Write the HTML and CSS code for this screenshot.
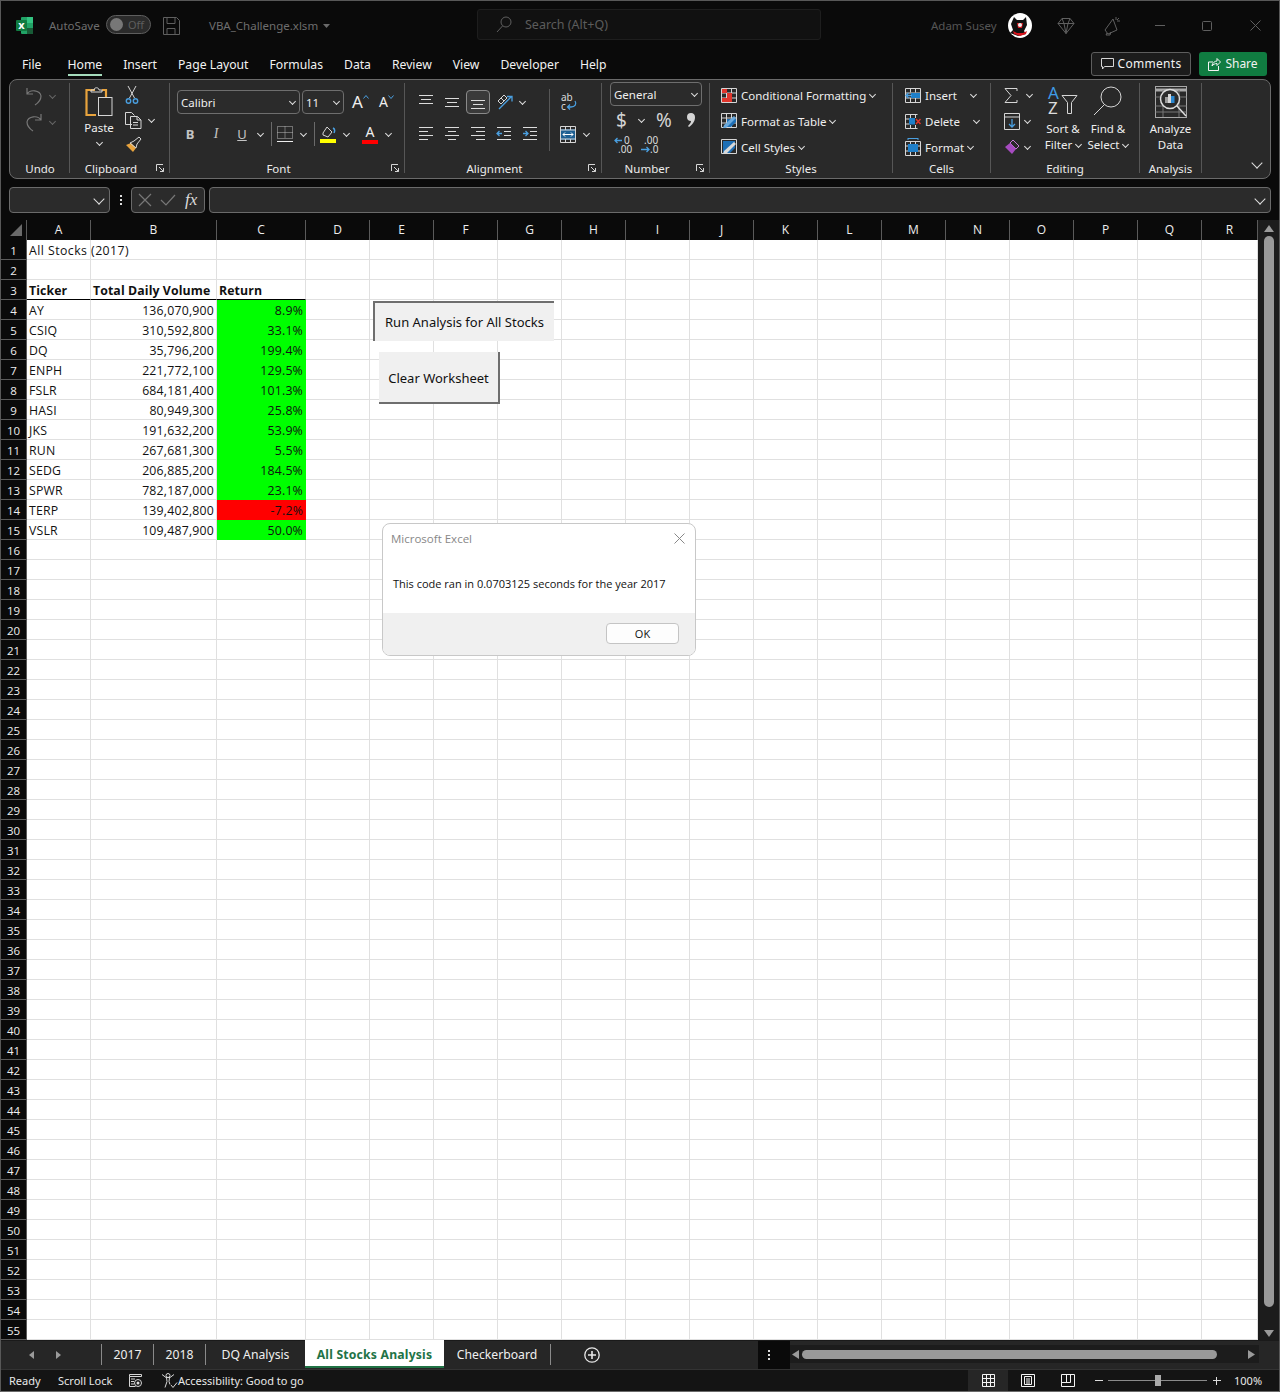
FILE: index.html
```html
<!DOCTYPE html>
<html lang="en">
<head>
    <meta charset="UTF-8">
    <title>VBA_Challenge.xlsm - Excel</title>
    <link rel="stylesheet" href="styles.css">
</head>
<body>
<div class="window">

    <!-- title bar -->
    <div class="titlebar">
        <svg class="logo" width="18" height="17" viewBox="0 0 18 17"><rect x="5" y="0" width="12" height="17" rx="1" fill="#21a366"/><rect x="11" y="0" width="6" height="6" fill="#33c481"/><rect x="11" y="11" width="6" height="6" fill="#185c37"/><rect x="0" y="3" width="11" height="11" rx="1" fill="#107c41"/><text x="5.5" y="12" class="logo-x">x</text></svg>
        <span class="autosave">AutoSave</span>
        <span class="toggle"><span class="knob"></span>Off</span>
        <svg class="save" width="17" height="18" viewBox="0 0 17 18"><path class="dim" d="M.5.5h13l3 3v14H.5zM4 .5v6h8v-6M4 17.5v-6h8v6"/></svg>
        <span class="filename">VBA_Challenge.xlsm</span>
        <svg class="file-caret" width="7" height="4" viewBox="0 0 7 4"><path d="M0 0h7L3.5 4z" fill="#6a6a6a"/></svg>
        <div class="search">
            <svg width="16" height="17" viewBox="0 0 16 17"><circle cx="10" cy="6" r="5" class="dim"/><path class="dim" d="M6.5 10 1 16"/></svg>
            <span>Search (Alt+Q)</span>
        </div>
        <span class="username">Adam Susey</span>
        <svg class="avatar" width="24" height="25" viewBox="0 0 24 25"><ellipse cx="12" cy="12.5" rx="12" ry="12.5" fill="#fff"/><path d="M6 4l3 3h6l3-3 1 8-3 6 2 3-8 2-8-3 3-3-2-6z" fill="#111"/><path d="M9 10h6l-1 5h-4zM5 18l4 2 6 0 4-2-1 3-6 2-6-2z" fill="#d8141c"/><circle cx="12" cy="12" r="2" fill="#eee"/></svg>
        <svg class="premium" width="18" height="16" viewBox="0 0 18 16"><path class="dim" d="M5 .5h8l4 5-8 10-8-10zM1 5.500h16M5 .5l2 5 2 10 2-10 2-5"/></svg>
        <svg class="idea" width="18" height="20" viewBox="0 0 18 20"><path class="dim" d="M10 3 2 14l3 4 9-4zM4 17l-1 2 4 0 1-3M13 1v3M17 5h-3M16 2l-2 2"/></svg>
        <svg class="win-min" width="10" height="1" viewBox="0 0 10 1"><path class="dim" d="M0 .5h10"/></svg>
        <svg class="win-max" width="10" height="10" viewBox="0 0 10 10"><rect class="dim" x=".5" y=".5" width="9" height="9" rx="1"/></svg>
        <svg class="win-close" width="11" height="11" viewBox="0 0 11 11"><path class="dim" d="M.5.500l10 10M10.500.500l-10 10"/></svg>
    </div>

    <!-- ribbon tabs -->
    <div class="tabbar">
        <span class="rtab file-tab">File</span>
        <span class="rtab active">Home</span>
        <span class="rtab">Insert</span>
        <span class="rtab">Page Layout</span>
        <span class="rtab">Formulas</span>
        <span class="rtab">Data</span>
        <span class="rtab">Review</span>
        <span class="rtab">View</span>
        <span class="rtab">Developer</span>
        <span class="rtab">Help</span>
        <button class="comments">
            <svg width="13" height="13" viewBox="0 0 13 13"><path class="ic" d="M.5 1.500h12v8h-9l-2 2.500v-2.500h-1z"/></svg>
            Comments
        </button>
        <button class="share">
            <svg width="13" height="14" viewBox="0 0 13 14"><path class="ic-w" d="M5 5H.5v8.500h10V9M4 9c0-3 3-5 5-5V1.500L12.500 5 9 8.500V6.500C7 6.500 5 7.500 4 9z"/></svg>
            Share
        </button>
    </div>

    <!-- ribbon -->
    <div class="ribbon">

        <div class="group undo">
            <div class="body stack">
                <div class="line">
                    <svg width="16" height="19" viewBox="0 0 16 19"><path class="ic-dim" d="M1 1v6h6M1 7c3-5 13-4 14 2 0 4-3 7-6 9"/></svg>
                    <i class="caret off"></i>
                </div>
                <div class="line">
                    <svg width="16" height="19" viewBox="0 0 16 19"><path class="ic-dim" d="M15 1v6H9M15 7C12 2 2 3 1 9c0 4 3 7 6 9"/></svg>
                    <i class="caret off"></i>
                </div>
            </div>
            <div class="label">Undo</div>
        </div>

        <div class="group clipboard launch">
            <div class="body">
                <div class="paste">
                    <svg width="28" height="30" viewBox="0 0 28 30"><path d="M10 3H1.500v25H11" fill="none" stroke="#e8a33d" stroke-width="2.200"/><path d="M17 3h4v8" fill="none" stroke="#e8a33d" stroke-width="2.200"/><path class="ic" d="M6 5V3h3c0-3 5-3 5 0h3v2z"/><rect class="ic" x="13.500" y="10.500" width="13.500" height="18"/></svg>
                    <span class="paste-text">Paste</span>
                    <i class="caret"></i>
                </div>
                <div class="clip-tools">
                    <svg width="12" height="18" viewBox="0 0 12 18"><path class="ic" d="M2 0l6.500 12M10 0L3.500 12"/><circle cx="2.500" cy="15" r="2.200" fill="none" stroke="#4a9fe0" stroke-width="1.400"/><circle cx="9.500" cy="15" r="2.200" fill="none" stroke="#4a9fe0" stroke-width="1.400"/></svg>
                    <div class="line">
                        <svg width="17" height="17" viewBox="0 0 17 17"><path class="ic" d="M7 12.500H.5V.5h6l3 3M5.500 4.500h7l3.500 3.500v8.500H5.500zM12 4.500V8h4M8 10.500h5M8 13h5"/></svg>
                        <i class="caret"></i>
                    </div>
                    <svg width="17" height="16" viewBox="0 0 17 16"><path d="M1 8l7 7 3-4-5-5z" fill="#e8a33d"/><path class="ic" d="M5 6l6 5 1-4 4-5-2-2-5 4z"/></svg>
                </div>
            </div>
            <div class="label">Clipboard</div>
            <svg class="launcher" width="8" height="8" viewBox="0 0 8 8"><path class="ic" d="M.5 7V.5H7M3 3l4.500 4.500M7.500 4v3.500H4"/></svg>
        </div>

        <div class="group font launch">
            <div class="body stack2">
                <div class="row">
                    <div class="combo font-name">Calibri<i class="caret"></i></div>
                    <div class="combo font-size">11<i class="caret"></i></div>
                    <span class="grow-a">A<svg width="6" height="4" viewBox="0 0 6 4"><path d="M.5 3.500l2.500-3 2.500 3" fill="none" stroke="#4a9fe0"/></svg></span>
                    <span class="shrink-a">A<svg width="6" height="4" viewBox="0 0 6 4"><path d="M.5.500l2.500 3 2.500-3" fill="none" stroke="#4a9fe0"/></svg></span>
                </div>
                <div class="row">
                    <span class="btn strong">B</span>
                    <span class="btn slant">I</span>
                    <span class="btn under">U</span>
                    <span class="drop"><i class="caret"></i></span>
                    <span class="vsep"></span>
                    <span class="btn"><svg width="16" height="17" viewBox="0 0 16 17"><path d="M.5.500h15v12H.5zM8 .5v12M.5 6.500h15" fill="none" stroke="#bbb" stroke-dasharray="1 1"/><path d="M0 15.500h16" stroke="#eee"/></svg></span>
                    <span class="drop"><i class="caret"></i></span>
                    <span class="vsep"></span>
                    <span class="btn"><svg width="16" height="19" viewBox="0 0 16 19"><path class="ic" d="M3 8l4-6 5 5-4 5-5-2z"/><path d="M13 3c2 1 2 3 1 5" fill="none" stroke="#4a9fe0" stroke-width="1.500"/><rect y="14" width="16" height="4" fill="#ffff00"/></svg></span>
                    <span class="drop"><i class="caret"></i></span>
                    <span class="btn color-a">A</span>
                    <span class="drop"><i class="caret"></i></span>
                </div>
            </div>
            <div class="label">Font</div>
            <svg class="launcher" width="8" height="8" viewBox="0 0 8 8"><path class="ic" d="M.5 7V.5H7M3 3l4.500 4.500M7.500 4v3.500H4"/></svg>
        </div>

        <div class="group alignment launch">
            <div class="body">
                <div class="stack2">
                    <div class="row">
                        <span class="btn"><svg width="14" height="14" viewBox="0 0 14 14"><path class="lines" d="M0 .5h14M2 4.500h10M0 8.500h14"/></svg></span>
                        <span class="btn"><svg width="14" height="14" viewBox="0 0 14 14"><path class="lines" d="M0 3.500h14M2 7.500h10M0 11.500h14"/></svg></span>
                        <span class="btn pressed"><svg width="14" height="14" viewBox="0 0 14 14"><path class="lines" d="M0 5.500h14M2 9.500h10M0 13.500h14"/></svg></span>
                        <span class="btn"><svg width="17" height="16" viewBox="0 0 17 16"><path class="ic" d="M2 7l6-6 3 3-6 6zM5 4l3 3"/><path d="M3 15 15 3M11 2.500h5v5" fill="none" stroke="#4a9fe0" stroke-width="1.300"/></svg></span>
                        <span class="drop"><i class="caret"></i></span>
                    </div>
                    <div class="row">
                        <span class="btn"><svg width="14" height="14" viewBox="0 0 14 14"><path class="lines" d="M0 .5h14M0 4.500h9M0 8.500h14M0 12.500h9"/></svg></span>
                        <span class="btn"><svg width="14" height="14" viewBox="0 0 14 14"><path class="lines" d="M0 .5h14M3 4.500h8M0 8.500h14M3 12.500h8"/></svg></span>
                        <span class="btn"><svg width="14" height="14" viewBox="0 0 14 14"><path class="lines" d="M0 .5h14M5 4.500h9M0 8.500h14M5 12.500h9"/></svg></span>
                        <span class="btn"><svg width="14" height="14" viewBox="0 0 14 14"><path class="lines" d="M0 .5h14M7 4.500h7M7 8.500h7M0 12.500h14"/><path d="M5 6.500H0M2.500 4 0 6.500 2.500 9" fill="none" stroke="#4a9fe0" stroke-width="1.300"/></svg></span>
                        <span class="btn"><svg width="14" height="14" viewBox="0 0 14 14"><path class="lines" d="M0 .5h14M7 4.500h7M7 8.500h7M0 12.500h14"/><path d="M0 6.500h5M2.500 4 5 6.500 2.500 9" fill="none" stroke="#4a9fe0" stroke-width="1.300"/></svg></span>
                    </div>
                </div>
                <span class="inner-sep"></span>
                <div class="stack2 merge-col">
                    <div class="row">
                        <svg class="wrap-ic" width="18" height="20" viewBox="0 0 18 20"><text x="1" y="9" class="tiny">ab</text><text x="1" y="18" class="tiny">c</text><path d="M15 9c2 3 0 6-4 6H8M10 12.500 7.500 15 10 17.500" fill="none" stroke="#4a9fe0" stroke-width="1.300"/></svg>
                    </div>
                    <div class="row">
                        <svg width="16" height="17" viewBox="0 0 16 17"><rect x="0" y="3" width="16" height="11" fill="#1e5f92"/><path class="ic" d="M.5.500h15v16H.5zM.5 4h15M.5 13h15M5.500.5V4M10.500.5V4M5.500 13v3.500M10.500 13v3.500"/><path d="M3 8.500h10M5 6.500l-2 2 2 2M11 6.500l2 2-2 2" fill="none" stroke="#fff"/></svg>
                        <span class="drop merge-drop"><i class="caret"></i></span>
                    </div>
                </div>
            </div>
            <div class="label">Alignment</div>
            <svg class="launcher" width="8" height="8" viewBox="0 0 8 8"><path class="ic" d="M.5 7V.5H7M3 3l4.500 4.500M7.500 4v3.500H4"/></svg>
        </div>

        <div class="group number launch">
            <div class="body num-stack">
                <div class="combo num-format">General<i class="caret"></i></div>
                <div class="row num-symbols">
                    <span class="sym dollar">$</span>
                    <span class="drop"><i class="caret"></i></span>
                    <span class="sym percent">%</span>
                    <svg class="comma" width="8" height="14" viewBox="0 0 8 14"><path d="M4 0a4 4 0 0 1 4 4.500c0 4-3 7.500-6 9.500l-1-1c2-2 3-3.500 3-5a4 4 0 0 1 0-8z" fill="#d4d4d4"/></svg>
                </div>
                <div class="row num-decimals">
                    <svg width="21" height="20" viewBox="0 0 21 20"><path d="M8 5.500H1M3.500 3 1 5.500 3.500 8" fill="none" stroke="#4a9fe0" stroke-width="1.300"/><text x="10" y="9" class="tiny">0</text><text x="4" y="18" class="tiny">.00</text></svg>
                    <svg width="21" height="20" viewBox="0 0 21 20"><text x="4" y="9" class="tiny">.00</text><path d="M1 14.500h8M6.500 12 9 14.500 6.500 17" fill="none" stroke="#4a9fe0" stroke-width="1.300"/><text x="10" y="18" class="tiny">.0</text></svg>
                </div>
            </div>
            <div class="label">Number</div>
            <svg class="launcher" width="8" height="8" viewBox="0 0 8 8"><path class="ic" d="M.5 7V.5H7M3 3l4.500 4.500M7.500 4v3.500H4"/></svg>
        </div>

        <div class="group styles">
            <div class="body list">
                <div class="item">
                    <svg width="16" height="15" viewBox="0 0 16 15"><path class="ic" d="M.5.500h15v14H.5zM5.500.5v14M10.500.5v14M.5 5h15M.5 10h15"/><path d="M1 1h5v4H1zM6 5h5v5H6zM1 10h10v4H1z" fill="#e0352b"/></svg>
                    Conditional Formatting<i class="caret"></i>
                </div>
                <div class="item">
                    <svg width="16" height="16" viewBox="0 0 16 16"><path class="ic" d="M.5.500h15v14H.5zM5.500.5v14M10.500.5v14M.5 5h15M.5 10h15"/><path d="M6 6h9v3l-5 5H6z" fill="#1e6fb5"/><path d="M15 5 5 15H2l1-3L13 3z" fill="#6aa9dc"/></svg>
                    Format as Table<i class="caret"></i>
                </div>
                <div class="item">
                    <svg width="16" height="16" viewBox="0 0 16 16"><path class="ic" d="M.5.500h15v14H.5z"/><path d="M2 2h12v7l-5 5H2z" fill="#1e6fb5"/><path d="M15 5 5 15H2l1-3L13 3z" fill="#d8d8d8"/></svg>
                    Cell Styles<i class="caret"></i>
                </div>
            </div>
            <div class="label">Styles</div>
        </div>

        <div class="group cells">
            <div class="body list">
                <div class="item">
                    <svg width="16" height="15" viewBox="0 0 16 15"><path class="ic" d="M.5.500h15v14H.5zM.5 5h15M.5 10h15M5.500.5v4M5.500 10v4M10.500.5v4M10.500 10v4"/><rect x="6" y="5" width="9" height="5" fill="#1e7fc9"/><path d="M7 7.500H1M3.500 5 1 7.500 3.500 10" fill="none" stroke="#4a9fe0" stroke-width="1.300"/></svg>
                    Insert<i class="caret far"></i>
                </div>
                <div class="item">
                    <svg width="16" height="15" viewBox="0 0 16 15"><path class="ic" d="M.5.500h12M.5 14.500h12M.5.5v14M.5 5h4M.5 10h4M5.500.5V4M5.500 11v3.500M10.500.5V4M10.500 11v3.500"/><rect x="4" y="4" width="6" height="6.500" fill="#1e7fc9"/><path d="M11 5l4.500 5M15.500 5 11 10" stroke="#e0352b" stroke-width="1.500"/></svg>
                    Delete<i class="caret far"></i>
                </div>
                <div class="item">
                    <svg width="16" height="18" viewBox="0 0 16 18"><path d="M3 .5h10M3 0v2M13 0v2" stroke="#4a9fe0"/><path class="ic" d="M.5 3.500h15v14H.5zM.5 8h15M.5 13h15M5.500 3.500v14M10.500 3.500v14"/><rect x="3" y="6" width="10" height="8" fill="#1e7fc9"/></svg>
                    Format<i class="caret"></i>
                </div>
            </div>
            <div class="label">Cells</div>
        </div>

        <div class="group editing">
            <div class="body">
                <div class="stack edit-left">
                    <div class="line">
                        <svg width="14" height="15" viewBox="0 0 14 15"><path class="ic" d="M13 3V.5H1L7 7.500 1 14.500h12V12"/></svg>
                        <i class="caret sum-caret"></i>
                    </div>
                    <div class="line">
                        <svg width="16" height="17" viewBox="0 0 16 17"><path class="ic" d="M.5.500h15v16H.5zM.5 4h15"/><path d="M8 6v8M5 11l3 3 3-3" fill="none" stroke="#4a9fe0" stroke-width="1.300"/></svg>
                        <i class="caret"></i>
                    </div>
                    <div class="line">
                        <svg width="16" height="16" viewBox="0 0 16 16"><path d="M9 1l6 6-3 3-6-6z" fill="none" stroke="#c87ad8"/><path d="M6 4l6 6-4 5-7-7z" fill="#a64bc0"/></svg>
                        <i class="caret"></i>
                    </div>
                </div>
                <div class="tall sort">
                    <svg width="30" height="30" viewBox="0 0 30 30"><text x="0" y="13" class="az blue">A</text><text x="0" y="28" class="az">Z</text><path class="ic" d="M14 9.500h15l-5.500 7v11h-4v-11z"/></svg>
                    <span>Sort &amp;</span>
                    <span>Filter<i class="caret"></i></span>
                </div>
                <div class="tall find">
                    <svg width="30" height="30" viewBox="0 0 30 30"><circle class="ic" cx="18" cy="11" r="10"/><path class="ic" d="M11 19 1 29"/></svg>
                    <span>Find &amp;</span>
                    <span>Select<i class="caret"></i></span>
                </div>
            </div>
            <div class="label">Editing</div>
        </div>

        <div class="group analysis">
            <div class="body">
                <div class="tall analyze">
                    <svg width="32" height="32" viewBox="0 0 32 32"><rect x=".5" y=".5" width="31" height="31" fill="none" stroke="#a8a8a8"/><path d="M0 4h32" stroke="#a8a8a8" stroke-width="3"/><path d="M.5 11h31M.5 20h31M.5 26h31M8 4v27M24 4v27" stroke="#777"/><circle cx="15" cy="13" r="9.500" fill="#2b2b2b" stroke="#ddd" stroke-width="1.500"/><rect x="10" y="11" width="3" height="6" fill="#9a9a9a"/><rect x="13" y="8" width="3" height="9" fill="#d8d8d8"/><rect x="16" y="10" width="3.500" height="7" fill="#2a87d0"/><path d="M22 20l9 10" stroke="#ddd" stroke-width="1.500"/></svg>
                    <span>Analyze</span>
                    <span>Data</span>
                </div>
            </div>
            <div class="label">Analysis</div>
        </div>

        <div class="collapse"><i class="caret big"></i></div>
    </div>

    <!-- formula bar -->
    <div class="formulabar">
        <div class="namebox"><i class="caret big"></i></div>
        <div class="grip"><i></i><i></i><i></i></div>
        <div class="fxbox">
            <svg width="14" height="14" viewBox="0 0 14 14"><path class="ic-dim" d="M1 1l12 12M13 1 1 13"/></svg>
            <svg width="16" height="12" viewBox="0 0 16 12"><path class="ic-dim" d="M1 6l5 5L15 1"/></svg>
            <span class="fx">fx</span>
        </div>
        <div class="formula"><i class="caret big"></i></div>
    </div>

    <!-- sheet -->
    <div class="sheet">
        <div class="grid-wrap">
            <table class="grid" id="grid"></table>

            <button class="macro run-macro">Run Analysis for All Stocks</button>
            <button class="macro clear-macro">Clear Worksheet</button>

            <div class="msgbox">
                <div class="msg-title">
                    Microsoft Excel
                    <svg width="11" height="11" viewBox="0 0 11 11"><path d="M.5.500l10 10M10.500.500l-10 10" stroke="#888" fill="none"/></svg>
                </div>
                <div class="msg-text">This code ran in 0.0703125 seconds for the year 2017</div>
                <div class="msg-foot"><button class="msg-ok">OK</button></div>
            </div>
        </div>
        <div class="vscroll">
            <svg width="10" height="7" viewBox="0 0 10 7"><path d="M5 0l5 7H0z" fill="#9a9a9a"/></svg>
            <div class="vthumb"></div>
            <svg width="10" height="7" viewBox="0 0 10 7"><path d="M5 7 0 0h10z" fill="#9a9a9a"/></svg>
        </div>
    </div>

    <!-- sheet tabs -->
    <div class="sheetbar">
        <div class="nav">
            <svg width="5" height="8" viewBox="0 0 5 8"><path d="M5 0v8L0 4z" fill="#9a9a9a"/></svg>
            <svg width="5" height="8" viewBox="0 0 5 8"><path d="M0 0v8l5-4z" fill="#9a9a9a"/></svg>
        </div>
        <span class="stab first">2017</span>
        <span class="stab">2018</span>
        <span class="stab dq">DQ Analysis</span>
        <span class="stab current">All Stocks Analysis</span>
        <span class="stab check">Checkerboard</span>
        <svg class="add-sheet" width="16" height="16" viewBox="0 0 16 16"><circle cx="8" cy="8" r="7.200" fill="none" stroke="#e8e8e8" stroke-width="1.300"/><path d="M8 4v8M4 8h8" stroke="#e8e8e8" stroke-width="1.600"/></svg>
        <div class="more"><i></i><i></i><i></i></div>
        <div class="hscroll">
            <svg width="7" height="9" viewBox="0 0 7 9"><path d="M7 0v9L0 4.500z" fill="#9a9a9a"/></svg>
            <div class="hthumb"></div>
            <svg width="7" height="9" viewBox="0 0 7 9"><path d="M0 0v9l7-4.500z" fill="#9a9a9a"/></svg>
        </div>
    </div>

    <!-- status bar -->
    <div class="statusbar">
        <span class="ready">Ready</span>
        <span class="lock">Scroll Lock</span>
        <svg class="macro-ic" width="13" height="13" viewBox="0 0 13 13"><path class="ic" d="M.5.500h12v2H.5zM.5 2.500v10h6M2 5h4M2 7.500h3M2 10h3"/><circle class="ic" cx="9" cy="9" r="3.500"/><circle cx="9" cy="9" r="1.500" fill="#ddd"/></svg>
        <svg class="access-ic" width="17" height="16" viewBox="0 0 17 16"><circle class="ic" cx="7" cy="2.500" r="2"/><path class="ic" d="M1 1.500l4 3h4l4-3M5.500 4.500l.5 4-2 6M8.500 4.500l-.5 4 1 3M10 12l2 2.500 4-5"/></svg>
        <span class="access">Accessibility: Good to go</span>
        <div class="views">
            <span class="view on"><svg width="13" height="13" viewBox="0 0 13 13"><path class="ic-w" d="M.5.500h12v12H.5zM4.500.5v12M8.500.5v12M.5 4.500h12M.5 8.500h12"/></svg></span>
            <span class="view"><svg width="14" height="13" viewBox="0 0 14 13"><path class="ic-w" d="M.5.500h13v12H.5zM3.500 2.500h7v8h-7zM5 5h4M5 7h4M5 9h4"/></svg></span>
            <span class="view"><svg width="14" height="13" viewBox="0 0 14 13"><path class="ic-w" d="M.5.500h13v12H.5zM.5 8.500h9V.5M5.500.5v8"/></svg></span>
        </div>
        <span class="zoom-sign minus"></span>
        <div class="slider"><span class="slider-thumb"></span></div>
        <span class="zoom-sign plus"></span>
        <span class="zoom-value">100%</span>
    </div>
</div>

<script src="grid.js"></script>
</body>
</html>
```

FILE: styles.css
```css
* {
    box-sizing: border-box;
}
body {
    margin: 0;
    background: #0a0a0a;
    font-family: "Noto Sans", "Open Sans", sans-serif;
    font-size: 12px;
    color: #efefef;
}
button {
    font-family: inherit;
    cursor: pointer;
}
i {
    font-style: normal;
}
svg {
    display: block;
    flex: none;
    overflow: visible;
}
.window {
    height: 1392px;
    border: 1px solid #585858;
    border-bottom-color: #6a6a6a;
    background: #0a0a0a;
    overflow: hidden;
}

/* svg strokes */
.dim {
    fill: none;
    stroke: #5f5f5f;
}
.ic {
    fill: none;
    stroke: #d6d6d6;
}
.ic-w {
    fill: none;
    stroke: #f4f4f4;
}
.ic-dim {
    fill: none;
    stroke: #777;
    stroke-width: 1.2;
}
.lines {
    fill: none;
    stroke: #dcdcdc;
}
.tiny {
    font-size: 10px;
    fill: #dcdcdc;
}
.az {
    font-size: 17px;
    fill: #dcdcdc;
}
.az.blue {
    fill: #3f9be6;
}

/* caret used everywhere */
.caret {
    display: inline-block;
    width: 5px;
    height: 5px;
    margin: 0 0 2px 5px;
    border-right: 1.4px solid #dedede;
    border-bottom: 1.4px solid #dedede;
    transform: rotate(45deg);
    flex: none;
}
.caret.off {
    border-color: #666;
    margin-left: 8px;
}
.caret.big {
    width: 8px;
    height: 8px;
    margin: 0;
}

/* title bar */
.titlebar {
    display: flex;
    align-items: center;
    height: 47px;
    padding-top: 2px;
    color: #6e6e6e;
    font-size: 11.500px;
}
.logo {
    margin-left: 15px;
}
.logo-x {
    font-size: 11px;
    font-weight: 700;
    fill: #fff;
    text-anchor: middle;
}
.autosave {
    margin-left: 15px;
    width: 57px;
}
.toggle {
    display: flex;
    align-items: center;
    width: 45px;
    height: 19px;
    margin-top: -2px;
    border: 1px solid #5e5e5e;
    border-radius: 10px;
    background: #2b2b2b;
    padding-left: 3px;
    font-size: 11px;
    color: #5e5e5e;
}
.knob {
    width: 13px;
    height: 13px;
    border-radius: 50%;
    background: #777;
    margin-right: 5px;
}
.save {
    margin-left: 12px;
}
.filename {
    margin-left: 29px;
    width: 113px;
}
.file-caret {
    margin-left: 1px;
}
.search {
    display: flex;
    align-items: center;
    gap: 13px;
    width: 344px;
    height: 31px;
    margin: -2px 0 0 147px;
    padding-left: 18px;
    background: #111;
    border: 1px solid #1e1e1e;
    border-radius: 3px;
    color: #5c5c5c;
    font-size: 12.500px;
}
.username {
    margin-left: 110px;
    width: 70px;
    color: #555;
}
.avatar {
    margin-left: 7px;
}
.premium {
    margin-left: 25px;
}
.idea {
    margin-left: 28px;
}
.win-min {
    margin-left: 34px;
}
.win-max {
    margin-left: 37px;
}
.win-close {
    margin-left: 38px;
}

/* ribbon tabs */
.tabbar {
    display: flex;
    align-items: center;
    gap: 21px;
    height: 31px;
    padding-left: 21px;
}
.rtab {
    position: relative;
    top: 1px;
    font-size: 12.200px;
    color: #f2f2f2;
    line-height: 30px;
}
.file-tab {
    margin-right: 5px;
}
.rtab.active::after {
    content: "";
    position: absolute;
    left: 0;
    right: 0;
    bottom: 4px;
    height: 2px;
    background: #a5dcbc;
}
.comments,
.share {
    display: flex;
    align-items: center;
    justify-content: center;
    gap: 4px;
    height: 24px;
    padding-top: 1px;
    border-radius: 3px;
    color: #f2f2f2;
    font-size: 12px;
}
.comments {
    width: 100px;
    margin-left: auto;
    margin-right: -13px;
    background: #1c1c1c;
    border: 1px solid #5e5e5e;
    letter-spacing: .3px;
}
.share {
    width: 68px;
    margin-right: 12px;
    background: #107c41;
    border: none;
}

/* ribbon */
.ribbon {
    display: flex;
    height: 100px;
    margin: 0 8px;
    padding-left: 1px;
    background: #292929;
    border: 1px solid #6a6a6a;
    border-radius: 8px;
    font-size: 11.500px;
}
.group {
    position: relative;
    display: flex;
    flex-direction: column;
    flex: none;
    height: 90px;
    margin-top: 3px;
    border-right: 1px solid #565656;
}
.body {
    display: flex;
    flex: 1;
    min-height: 0;
}
.label {
    height: 16px;
    line-height: 16px;
    margin-bottom: -4px;
    text-align: center;
    font-size: 11.500px;
    color: #ececec;
}
.launch .label {
    padding-right: 17px;
}
.launcher {
    position: absolute;
    right: 5px;
    bottom: 1px;
}
.undo { width: 59px; }
.clipboard { width: 100px; }
.font { width: 235px; }
.alignment { width: 197px; }
.number { width: 108px; }
.styles { width: 183px; }
.cells { width: 98px; }
.editing { width: 149px; }
.analysis { width: 62px; }

.line {
    display: flex;
    align-items: center;
    height: 26px;
}
.stack {
    flex-direction: column;
}
.undo .stack {
    padding: 0 0 0 15px;
}

/* clipboard */
.paste {
    display: flex;
    flex-direction: column;
    align-items: center;
    width: 40px;
    margin-left: 9px;
    padding-top: 4px;
}
.paste-text {
    margin-top: 3px;
}
.paste .caret {
    margin: 5px 0 0;
}
.clip-tools {
    display: flex;
    flex-direction: column;
    align-items: flex-start;
    justify-content: space-between;
    height: 70px;
    margin-left: 6px;
    padding-top: 3px;
}
.clip-tools > svg:first-child {
    margin-left: 1px;
}
.clip-tools .caret {
    margin-left: 7px;
}

/* font group */
.stack2 {
    display: flex;
    flex-direction: column;
    gap: 8px;
    padding-top: 7px;
}
.row {
    display: flex;
    align-items: center;
    height: 24px;
}
.font .stack2 {
    padding-left: 7px;
}
.combo {
    display: flex;
    align-items: center;
    justify-content: space-between;
    height: 24px;
    padding: 1px 4px 0 3px;
    background: #2b2b2b;
    border: 1px solid #6e6e6e;
    border-radius: 4px;
}
.font-name {
    width: 123px;
}
.font-size {
    width: 42px;
    margin-left: 2px;
}
.grow-a,
.shrink-a {
    display: flex;
    align-items: flex-start;
    font-size: 17px;
    line-height: 20px;
}
.grow-a svg,
.shrink-a svg {
    margin-top: 3px;
}
.grow-a {
    margin-left: 8px;
}
.shrink-a {
    margin-left: 10px;
    font-size: 14px;
}
.btn {
    display: flex;
    align-items: center;
    justify-content: center;
    width: 26px;
    height: 24px;
}
.drop {
    display: flex;
    justify-content: center;
    width: 11px;
}
.drop .caret {
    margin: 0 0 2px;
}
.vsep {
    width: 1px;
    height: 24px;
    margin-left: 5px;
    background: #6a6a6a;
}
.strong {
    font-weight: 700;
    color: #c4c4c4;
    font-size: 13px;
}
.slant {
    font-style: italic;
    font-family: "Liberation Serif", serif;
    font-size: 14px;
    color: #c4c4c4;
}
.under {
    text-decoration: underline;
    font-size: 13px;
    color: #c4c4c4;
}
.color-a {
    margin-left: 5px;
    position: relative;
    font-size: 14px;
    padding-bottom: 5px;
}
.color-a::after {
    content: "";
    position: absolute;
    left: 5px;
    bottom: 2px;
    width: 16px;
    height: 4px;
    background: #ff0000;
}

/* alignment */
.alignment .body {
    padding-left: 8px;
}
.pressed {
    width: 24px;
    margin: 0 1px;
    background: #3a3a3a;
    border: 1px solid #8a8a8a;
    border-radius: 4px;
}
.inner-sep {
    width: 1px;
    height: 62px;
    margin: 6px 0 0 6px;
    background: #565656;
}
.merge-col {
    margin-left: 10px;
}
.merge-drop {
    margin-left: 5px;
}

/* number */
.num-stack {
    flex-direction: column;
    padding-left: 8px;
}
.num-format {
    width: 92px;
    margin-top: -1px;
}
.num-symbols {
    margin-top: 2px;
}
.num-decimals {
    gap: 5px;
    margin-left: 4px;
    margin-top: 1px;
}
.sym {
    display: block;
    font-size: 19px;
    color: #d4d4d4;
    line-height: 24px;
}
.dollar {
    margin-left: 6px;
    width: 16px;
}
.num-symbols .drop {
    width: 18px;
}
.percent {
    width: 28px;
    text-align: center;
}
.comma {
    margin-left: 9px;
}

/* styles + cells */
.list {
    flex-direction: column;
    margin-top: -1px;
}
.item {
    display: flex;
    align-items: center;
    gap: 4px;
    height: 26px;
    white-space: nowrap;
}
.styles .list {
    padding-left: 11px;
}
.cells .list {
    padding-left: 12px;
}
.item .caret {
    margin-left: 0;
}
.item .caret.far {
    margin-left: 10px;
}

/* editing */
.edit-left {
    width: 50px;
    padding-left: 13px;
    margin-top: -1px;
}
.sum-caret {
    margin-left: 9px;
}
.tall {
    display: flex;
    flex-direction: column;
    align-items: center;
    line-height: 16px;
    padding-top: 3px;
    white-space: nowrap;
}
.tall svg {
    margin-bottom: 5px;
}
.tall .caret {
    margin-left: 4px;
}
.sort {
    width: 44px;
}
.find {
    width: 46px;
}
.analyze {
    width: 61px;
    padding-top: 3px;
}
.analyze svg {
    margin-bottom: 3px;
}
.collapse {
    flex: 1;
    display: flex;
    align-items: flex-end;
    justify-content: flex-end;
    padding: 0 9px 8px 0;
}

/* formula bar */
.formulabar {
    display: flex;
    align-items: center;
    height: 26px;
    margin: 8px 8px 7px;
}
.namebox,
.fxbox,
.formula {
    height: 26px;
    background: #2b2b2b;
    border: 1px solid #6a6a6a;
    border-radius: 4px;
    display: flex;
    align-items: center;
}
.namebox {
    width: 101px;
    justify-content: flex-end;
    padding-right: 6px;
}
.grip {
    display: flex;
    flex-direction: column;
    gap: 2px;
    width: 21px;
    align-items: center;
}
.grip i,
.more i {
    width: 2px;
    height: 2px;
    background: #ddd;
}
.fxbox {
    width: 74px;
    gap: 8px;
    padding-left: 6px;
}
.fx {
    font-family: "Liberation Serif", serif;
    font-style: italic;
    font-size: 17px;
    color: #dcdcdc;
    margin-left: 1px;
}
.formula {
    flex: 1;
    margin-left: 4px;
    justify-content: flex-end;
    padding-right: 6px;
}
.namebox .caret,
.formula .caret,
.collapse .caret {
    margin-bottom: 3px;
}

/* sheet */
.sheet {
    display: flex;
    height: 1120px;
}
.grid-wrap {
    position: relative;
    width: 1257px;
    height: 1120px;
}
.grid {
    table-layout: fixed;
    border-collapse: separate;
    border-spacing: 0;
    width: 1257px;
    background: #fff;
    color: #111;
    font-family: "Open Sans", sans-serif;
    font-size: 12.300px;
    letter-spacing: .2px;
}
.grid th,
.grid td {
    height: 20px;
    padding: 1px 2px 0;
    overflow: visible;
    white-space: nowrap;
    font-weight: 400;
}
.grid td {
    border-right: 1px solid #e0e0e0;
    border-bottom: 1px solid #e0e0e0;
}
.grid thead th {
    background: #0a0a0a;
    color: #eee;
    border-right: 1px solid #5a5a5a;
    text-align: center;
    padding: 0 0 1px;
    font-size: 12px;
    letter-spacing: 0;
}
.grid tbody th {
    background: #0a0a0a;
    color: #eee;
    border-bottom: 1px solid #5a5a5a;
    border-right: 1px solid #5a5a5a;
    text-align: center;
    padding: 1px 0 0;
    font-size: 11.500px;
    letter-spacing: 0;
}
.grid .corner {
    padding: 0;
}
.corner svg {
    margin-left: 9px;
}
.grid .num {
    text-align: right;
}
.grid .head {
    font-weight: 700;
    letter-spacing: .1px;
    border-bottom-color: #000;
}
.grid .title {
    letter-spacing: .45px;
}
.grid .up {
    background: #00ff00;
    border-color: #00ff00;
}
.grid .down {
    background: #ff0000;
    border-color: #ff0000;
}

/* macro buttons + dialog float over the cells */
.macro {
    position: absolute;
    background: #f0f0f0;
    font-size: 13px;
    color: #111;
    padding: 0;
}
.run-macro {
    left: 372px;
    top: 81px;
    width: 181px;
    height: 40px;
    border: none;
    border-top: 2px solid #6e6e6e;
    border-left: 2px solid #6e6e6e;
}
.clear-macro {
    left: 378px;
    top: 132px;
    width: 121px;
    height: 52px;
    padding-top: 1px;
    border: none;
    border-right: 2px solid #6e6e6e;
    border-bottom: 2px solid #6e6e6e;
}
.msgbox {
    position: absolute;
    left: 381px;
    top: 303px;
    width: 314px;
    height: 133px;
    display: flex;
    flex-direction: column;
    background: #fff;
    border: 1px solid #c8c8c8;
    border-radius: 8px;
    overflow: hidden;
    color: #111;
    font-family: "Open Sans", sans-serif;
    font-size: 11px;
}
.msg-title {
    display: flex;
    justify-content: space-between;
    align-items: center;
    height: 28px;
    padding: 0 10px 0 8px;
    color: #888;
    font-size: 11.500px;
}
.msg-text {
    flex: 1;
    padding: 24px 0 0 10px;
}
.msg-foot {
    display: flex;
    justify-content: flex-end;
    align-items: center;
    height: 42px;
    padding: 0 16px 1px 0;
    background: #f0f0f0;
}
.msg-ok {
    width: 73px;
    height: 21px;
    padding: 0 0 1px;
    background: #fdfdfd;
    border: 1px solid #c4c4c4;
    border-radius: 4px;
    font-size: 11px;
    color: #111;
}

/* scrollbars */
.vscroll {
    display: flex;
    flex-direction: column;
    align-items: center;
    width: 21px;
    padding-top: 5px;
    background: #1c1c1c;
}
.vthumb {
    width: 10px;
    height: 1071px;
    margin: 4px 0 23px;
    background: #999;
    border-radius: 5px;
}

/* sheet tabs */
.sheetbar {
    display: flex;
    align-items: stretch;
    height: 29px;
    background: #262626;
    border-top: 1px solid #1a1a1a;
}
.nav {
    display: flex;
    align-items: center;
    gap: 22px;
    width: 100px;
    padding-left: 28px;
}
.stab {
    display: flex;
    align-items: center;
    justify-content: center;
    height: 21px;
    margin-top: 3px;
    width: 52px;
    border-left: 1px solid #8a8a8a;
    font-size: 12.200px;
    color: #f0f0f0;
}
.stab.dq {
    width: 100px;
}
.stab.current {
    width: 139px;
    height: 28px;
    margin-top: -1px;
    padding-top: 2px;
    background: #fff;
    border-left: none;
    border-bottom: 2px solid #217346;
    color: #217346;
    font-weight: 700;
    letter-spacing: .2px;
}
.stab.check {
    width: 107px;
    border-left: none;
    border-right: 1px solid #8a8a8a;
}
.add-sheet {
    margin: 6px 0 0 33px;
}
.more {
    display: flex;
    flex-direction: column;
    align-items: center;
    justify-content: center;
    gap: 2px;
    width: 32px;
    margin-left: 158px;
    padding-right: 11px;
    background: #0a0a0a;
}
.hscroll {
    display: flex;
    align-items: center;
    width: 469px;
    height: 18px;
    margin-top: 4px;
    padding: 0 4px 0 2px;
    background: #1c1c1c;
}
.hthumb {
    width: 417px;
    height: 9px;
    margin: 0 31px 0 3px;
    background: #999;
    border-radius: 5px;
}

/* status bar */
.statusbar {
    display: flex;
    align-items: center;
    height: 22px;
    background: #141414;
    border-top: 1px solid #333;
    font-size: 11px;
    color: #e8e8e8;
}
.ready {
    margin-left: 8px;
    width: 49px;
}
.lock {
    width: 64px;
}
.macro-ic {
    margin-left: 7px;
}
.access-ic {
    margin-left: 19px;
}
.access {
    width: 150px;
}
.views {
    display: flex;
    align-items: stretch;
    height: 21px;
    margin-left: 640px;
}
.view {
    display: flex;
    align-items: center;
    justify-content: center;
    width: 40px;
}
.view.on {
    background: #262626;
}
.zoom-sign {
    position: relative;
    width: 8px;
    height: 8px;
    margin-left: 7px;
}
.zoom-sign::before {
    content: "";
    position: absolute;
    left: 0;
    right: 0;
    top: 3px;
    height: 1px;
    background: #ddd;
}
.plus::after {
    content: "";
    position: absolute;
    top: 0;
    bottom: 0;
    left: 3px;
    width: 1px;
    background: #ddd;
}
.slider {
    position: relative;
    width: 99px;
    height: 1px;
    margin-left: 5px;
    background: #8a8a8a;
}
.slider-thumb {
    position: absolute;
    left: 47px;
    top: -5px;
    width: 6px;
    height: 11px;
    background: #aaa;
}
.plus {
    margin-left: 6px;
}
.zoom-value {
    margin-left: 13px;
}
```

FILE: grid.js
```js
// cells that have something in them, the rest of the sheet is empty
const stocks = [
    ["AY", "136,070,900", "8.9%"],
    ["CSIQ", "310,592,800", "33.1%"],
    ["DQ", "35,796,200", "199.4%"],
    ["ENPH", "221,772,100", "129.5%"],
    ["FSLR", "684,181,400", "101.3%"],
    ["HASI", "80,949,300", "25.8%"],
    ["JKS", "191,632,200", "53.9%"],
    ["RUN", "267,681,300", "5.5%"],
    ["SEDG", "206,885,200", "184.5%"],
    ["SPWR", "782,187,000", "23.1%"],
    ["TERP", "139,402,800", "-7.2%"],
    ["VSLR", "109,487,900", "50.0%"]
];

const letters = "ABCDEFGHIJKLMNOPQR".split("");
const widths = [64, 126, 89, 64, 64, 64, 64, 64, 64, 64, 64, 64, 64, 64, 64, 64, 64, 56];

function cell(text, cls) {
    return '<td' + (cls ? ' class="' + cls + '"' : '') + '>' + text + '</td>';
}

function buildRow(n) {
    let cells = [];
    if (n === 1) {
        cells.push(cell("All Stocks (2017)", "title"), cell(""), cell(""));
    } else if (n === 3) {
        cells.push(cell("Ticker", "head"), cell("Total Daily Volume", "head"), cell("Return", "head"));
    } else if (n >= 4 && n <= 15) {
        let s = stocks[n - 4];
        let sign = s[2].charAt(0) === "-" ? "down" : "up";
        cells.push(cell(s[0]), cell(s[1], "num"), cell(s[2], "num " + sign));
    } else {
        cells.push(cell(""), cell(""), cell(""));
    }
    for (let i = 3; i < letters.length; i++) {
        cells.push(cell(""));
    }
    return "<tr><th>" + n + "</th>" + cells.join("") + "</tr>";
}

let html = '<colgroup><col style="width:26px">';
widths.forEach(w => html += '<col style="width:' + w + 'px">');
html += '</colgroup><thead><tr><th class="corner"><svg width="12" height="12" viewBox="0 0 12 12"><path d="M12 0v12H0z" fill="#6a6a6a"/></svg></th>';
letters.forEach(l => html += "<th>" + l + "</th>");
html += "</tr></thead><tbody>";
for (let n = 1; n <= 55; n++) {
    html += buildRow(n);
}
html += "</tbody>";

document.getElementById("grid").innerHTML = html;
```
